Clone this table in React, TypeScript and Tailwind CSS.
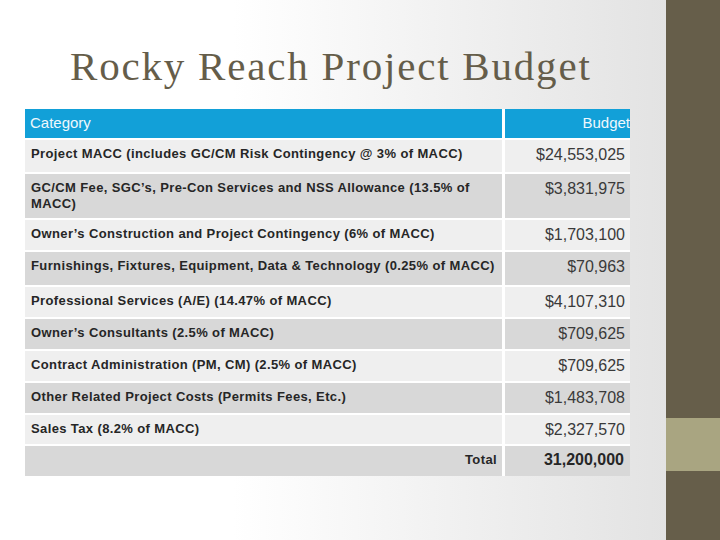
const rows: { label: React.ReactNode; value: string; h: string; dark: boolean }[] = [
  { label: "Project MACC (includes GC/CM Risk Contingency @ 3% of MACC)", value: "$24,553,025", h: "h-[32px]", dark: false },
  {
    label: (
      <>
        GC/CM Fee, SGC’s, Pre-Con Services and NSS Allowance (13.5% of
        <br />
        MACC)
      </>
    ),
    value: "$3,831,975",
    h: "h-[44px]",
    dark: true,
  },
  { label: "Owner’s Construction and Project Contingency (6% of MACC)", value: "$1,703,100", h: "h-[30px]", dark: false },
  { label: "Furnishings, Fixtures, Equipment, Data & Technology (0.25% of MACC)", value: "$70,963", h: "h-[33px]", dark: true },
  { label: "Professional Services (A/E) (14.47% of MACC)", value: "$4,107,310", h: "h-[30px]", dark: false },
  { label: "Owner’s Consultants (2.5% of MACC)", value: "$709,625", h: "h-[30px]", dark: true },
  { label: "Contract Administration (PM, CM) (2.5% of MACC)", value: "$709,625", h: "h-[30px]", dark: false },
  { label: "Other Related Project Costs (Permits Fees, Etc.)", value: "$1,483,708", h: "h-[30px]", dark: true },
  { label: "Sales Tax (8.2% of MACC)", value: "$2,327,570", h: "h-[29px]", dark: false },
]

export default function App() {
  return (
    <div className="w-[720px] h-[540px] flex overflow-hidden font-['Liberation_Sans',sans-serif]">
      <div className="flex-1 bg-gradient-to-r from-white from-35% to-[#e3e3e3] flex flex-col">
        <h1 className="pt-[46px] pl-[70px] h-[109px] text-[41px] leading-none tracking-[1.8px] text-[#655d4a] font-['Liberation_Serif',serif]">
          Rocky Reach Project Budget
        </h1>
        <div className="ml-[25px] w-[605px] flex flex-col gap-[2px] bg-white">
          <div className="grid grid-cols-[477px_125px] gap-x-[3px] h-[29px] text-[15px] text-[#eef8fd]">
            <div className="bg-[#12a0d8] pl-[5px] flex items-center">Category</div>
            <div className="bg-[#12a0d8] flex items-center justify-end">Budget</div>
          </div>
          {rows.map((r, i) => (
            <div key={i} className={`grid grid-cols-[477px_125px] gap-x-[3px] ${r.h}`}>
              <div className={`${r.dark ? "bg-[#d8d8d8]" : "bg-[#efefef]"} pl-[6px] pt-[6px] text-[13px] leading-[16px] tracking-[0.38px] font-bold text-[#262626]`}>
                {r.label}
              </div>
              <div className={`${r.dark ? "bg-[#d8d8d8]" : "bg-[#efefef]"} pr-[5px] pt-[5px] text-right text-[16px] leading-[20px] text-[#3a3a3a]`}>
                {r.value}
              </div>
            </div>
          ))}
          <div className="grid grid-cols-[477px_125px] gap-x-[3px] h-[30px]">
            <div className="bg-[#d8d8d8] pr-[5px] pt-[6px] text-right text-[13px] leading-[16px] tracking-[0.38px] font-bold text-[#262626]">Total</div>
            <div className="bg-[#d8d8d8] pr-[6px] pt-[4px] text-right text-[16px] leading-[20px] font-bold text-[#262626]">31,200,000</div>
          </div>
        </div>
      </div>
      <div className="w-[54px] h-full bg-[#665e4a] flex flex-col">
        <div className="h-[418px]" />
        <div className="h-[53px] bg-[#a9a581]" />
      </div>
    </div>
  )
}
